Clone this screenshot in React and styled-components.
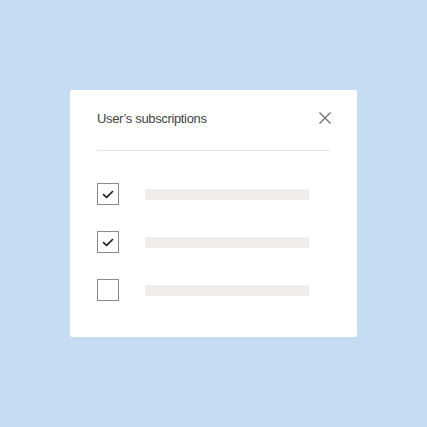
import styled, { createGlobalStyle } from "styled-components";

const GlobalStyle = createGlobalStyle`
  html, body {
    margin: 0;
    padding: 0;
  }
  body {
    background: #c6dcf3;
    font-family: "Liberation Sans", Arial, sans-serif;
  }
`;

const Page = styled.div`
  width: 100vw;
  height: 100vh;
  display: flex;
  align-items: center;
  justify-content: center;
`;

const Card = styled.div`
  width: 287px;
  height: 247px;
  box-sizing: border-box;
  background: #ffffff;
  border-radius: 2px;
  padding: 18px 27px 0;
`;

const Header = styled.div`
  height: 20px;
  display: flex;
  align-items: center;
  justify-content: space-between;
  padding-bottom: 22px;
  border-bottom: 1px solid #e4e4e4;
`;

const Title = styled.h2`
  margin: 0;
  font-size: 13px;
  font-weight: 400;
  color: #444;
  letter-spacing: -0.35px;
`;

const CloseButton = styled.button`
  width: 16px;
  height: 16px;
  margin-right: -3px;
  padding: 0;
  border: 0;
  background: none;
  display: flex;
  align-items: center;
  justify-content: center;
  cursor: pointer;
`;

const List = styled.ul`
  list-style: none;
  margin: 32px 0 0;
  padding: 0;
  display: flex;
  flex-direction: column;
  gap: 26px;
`;

const Row = styled.li`
  display: flex;
  align-items: center;
  gap: 26px;
  height: 22px;
`;

const Box = styled.span`
  width: 22px;
  height: 22px;
  box-sizing: border-box;
  border: 1px solid #8a8a8a;
  background: #fff;
  display: flex;
  align-items: center;
  justify-content: center;
  flex-shrink: 0;
`;

const Placeholder = styled.span`
  width: 164px;
  height: 11px;
  background: #efeeea;
`;

const Check = () => (
  <svg width="20" height="20" viewBox="0 0 20 20">
    <path d="M5.5 10.5 L8.5 13.5 L14.5 7.5" fill="none" stroke="#111" strokeWidth="1.6" strokeLinecap="round" strokeLinejoin="round" />
  </svg>
);

const Close = () => (
  <svg width="12" height="12" viewBox="0 0 12 12">
    <path d="M0.5 0.5 L11.5 11.5 M11.5 0.5 L0.5 11.5" stroke="#6f6f6f" strokeWidth="1.3" fill="none" />
  </svg>
);

const items = [true, true, false];

export default function App() {
  return (
    <>
      <GlobalStyle />
      <Page>
        <Card>
          <Header>
            <Title>User’s subscriptions</Title>
            <CloseButton aria-label="Close">
              <Close />
            </CloseButton>
          </Header>
          <List>
            {items.map((checked, i) => (
              <Row key={i}>
                <Box>{checked && <Check />}</Box>
                <Placeholder />
              </Row>
            ))}
          </List>
        </Card>
      </Page>
    </>
  );
}
